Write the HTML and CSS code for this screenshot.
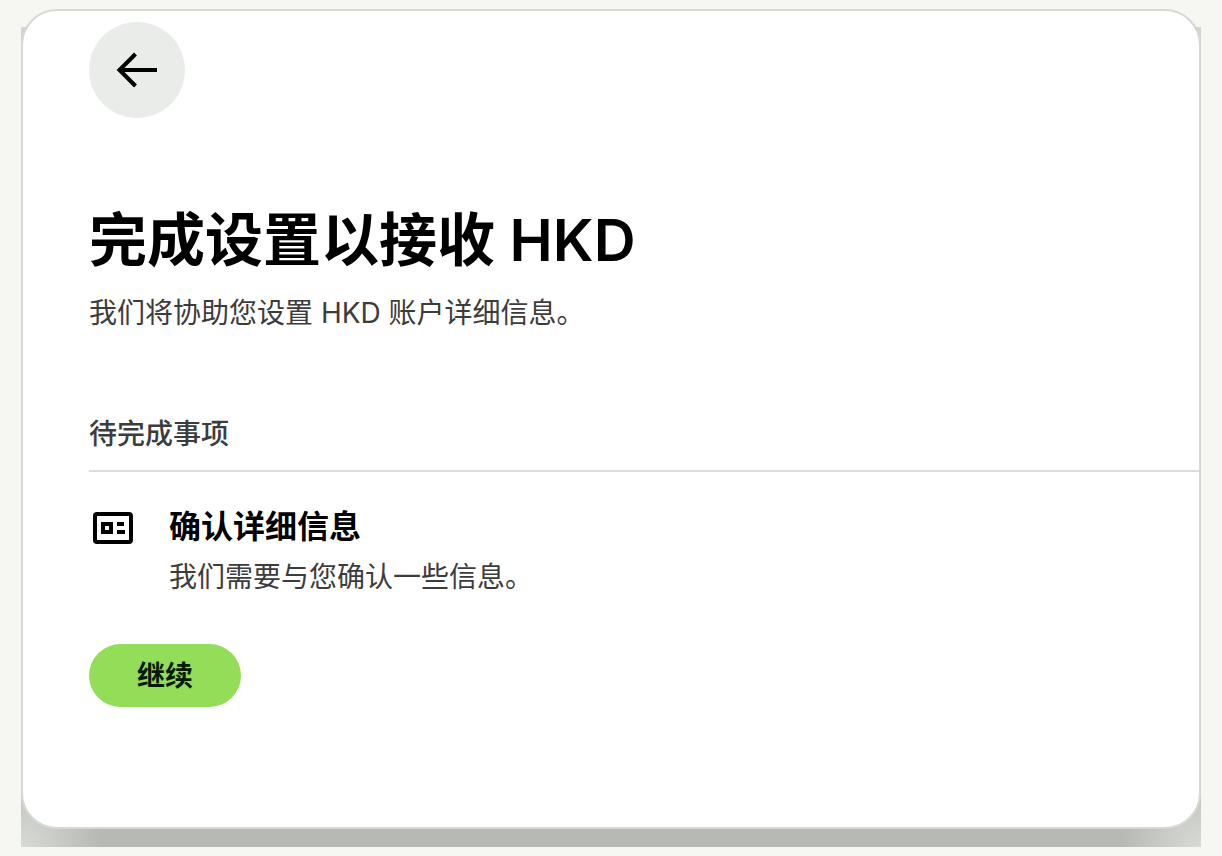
FILE: index.html
```html
<!DOCTYPE html>
<html lang="zh-CN">
<head>
<meta charset="utf-8">
<meta name="viewport" content="width=device-width, initial-scale=1">
<title>完成设置以接收 HKD</title>
<link rel="stylesheet" href="styles.css">
</head>
<body>
<div class="frame">
  <main class="card">
    <button class="back" type="button" aria-label="返回">
      <svg class="back-icon" viewBox="0 0 48 48" aria-hidden="true"><path d="M44 24H6M22.500 8L6.500 24L22.500 40" fill="none" stroke="currentColor" stroke-width="4"/></svg>
    </button>
    <h1 class="title">完成设置以接收 HKD</h1>
    <p class="lead">我们将协助您设置 HKD 账户详细信息。</p>
    <h2 class="section-title">待完成事项</h2>
    <div class="task">
      <svg class="task-icon" viewBox="0 0 48 48" aria-hidden="true">
        <rect x="6" y="10" width="36" height="28" rx="2" fill="none" stroke="currentColor" stroke-width="4"/>
        <rect x="14" y="20" width="8" height="8" fill="none" stroke="currentColor" stroke-width="4"/>
        <path d="M28 20h7M28 28h8" stroke="currentColor" stroke-width="4"/>
      </svg>
      <div class="task-body">
        <h3 class="task-title">确认详细信息</h3>
        <p class="task-text">我们需要与您确认一些信息。</p>
      </div>
    </div>
    <button class="continue" type="button">继续</button>
  </main>
</div>
</body>
</html>
```
FILE: styles.css
```css
* { box-sizing: border-box; }
body {
  margin: 0;
  padding: 9px 21px;
  background: #f6f7f2;
  color: #000;
  font-family: Inter, "Noto Sans CJK SC", sans-serif;
}
h1, h2, h3, p { margin: 0; }
.frame {
  position: relative;
  padding-bottom: 18px;
}
.frame::before {
  content: "";
  position: absolute;
  inset: 18px 0 0;
  z-index: -1;
  background:
    radial-gradient(circle 80px at 0 100%, #d8dad6, transparent),
    radial-gradient(circle 80px at 100% 100%, #d8dad6, transparent),
    linear-gradient(#d4d5ce 60%, #b7bab4 97%);
}
.card {
  padding: 11px 0 120px 66px;
  border: 2px solid #d6d8d1;
  border-radius: 36px;
  background: #fff;
}
.back {
  display: grid;
  place-items: center;
  width: 96px;
  height: 96px;
  padding: 0;
  border: 0;
  border-radius: 50%;
  background: #eaecea;
  color: #000;
}
.back-icon, .task-icon {
  display: block;
  flex: none;
  width: 48px;
  height: 48px;
}
.title {
  margin-top: 84px;
  font-size: 58px;
  font-weight: 600;
  line-height: 76px;
}
.lead, .task-text {
  color: #3c3c3c;
  font-size: 28px;
  font-weight: 400;
  line-height: 40px;
}
.lead { margin-top: 15px; }
.section-title {
  margin-top: 81px;
  padding-bottom: 16px;
  border-bottom: 2px solid #dcdddc;
  color: #3c3c3c;
  font-size: 28px;
  font-weight: 500;
  line-height: 40px;
}
.task {
  display: flex;
  align-items: flex-start;
  gap: 32px;
  margin-top: 32px;
}
.task-title {
  font-size: 32px;
  font-weight: 600;
  line-height: 46px;
}
.task-text { margin-top: 7px; }
.continue {
  display: block;
  margin-top: 47px;
  padding: 12px 48px 11px;
  border: 0;
  border-radius: 32px;
  background: #93dd58;
  color: #051a02;
  font: inherit;
  font-size: 28px;
  font-weight: 600;
  line-height: 40px;
}
```
